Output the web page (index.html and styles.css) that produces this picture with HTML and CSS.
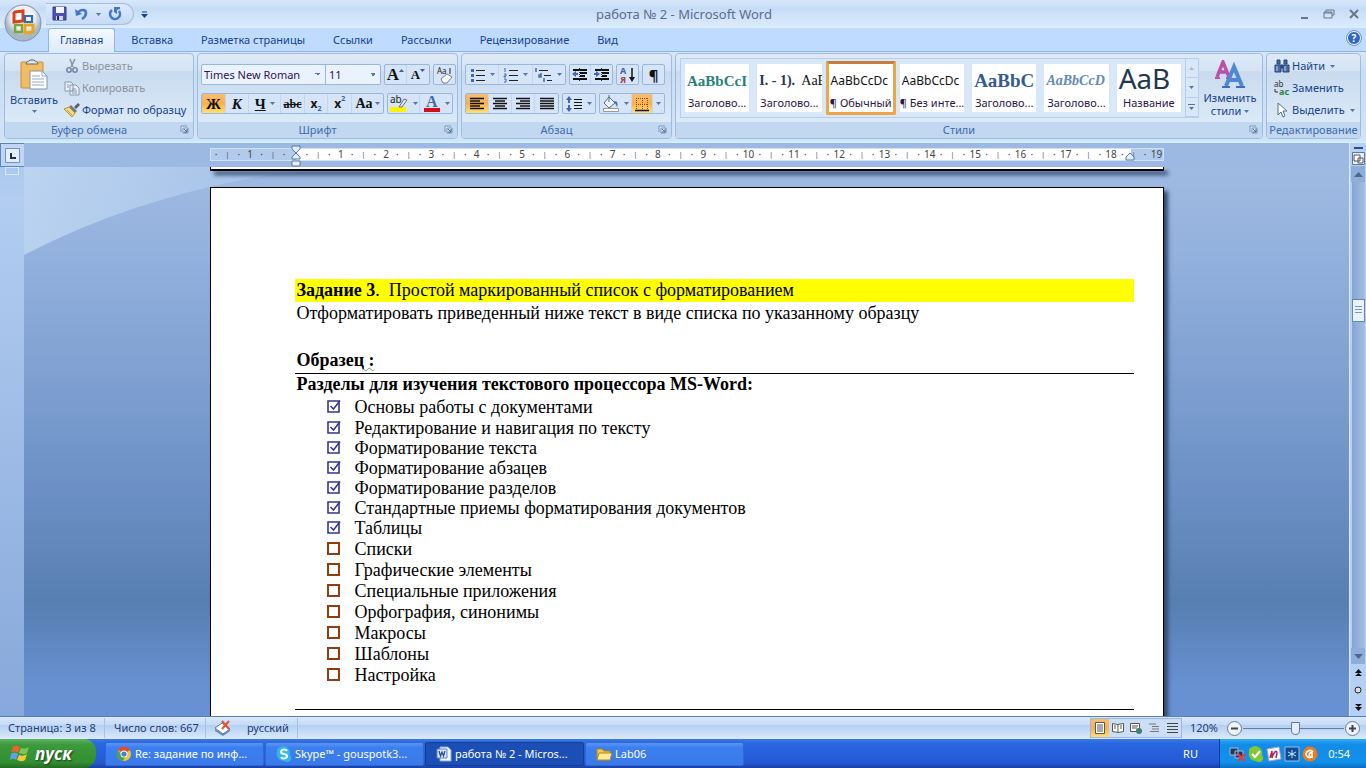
FILE: index.html
```html
<!DOCTYPE html>
<html lang="ru">
<head>
<meta charset="utf-8">
<title>работа № 2 - Microsoft Word</title>
<link rel="stylesheet" href="styles.css">
</head>
<body>
<svg class="defs" aria-hidden="true">
  <symbol id="checked" viewBox="0 0 16 16"><path d="M2 3h11v11H2z" fill="#fff" stroke="#36368c" stroke-width="1.6"/><path d="M4.500 8l3 3L14 2.500" fill="none" stroke="#36368c" stroke-width="1.500"/></symbol>
  <symbol id="empty" viewBox="0 0 16 16"><path d="M2 3h11v11H2z" fill="#fff" stroke="#933c0e" stroke-width="2"/></symbol>
  <symbol id="launch" viewBox="0 0 9 9"><path d="M1 7V1h6M3 3h5v5H3z" fill="#e8f1fc" stroke="#7390b9"/><path d="M4 4l3 3M7 4v3H4" fill="none" stroke="#42658f"/></symbol>
  <symbol id="caret" viewBox="0 0 5 3"><path d="M0 0h5L2.500 3z" fill="#5675a2"/></symbol>
</svg>
<header class="top">
  <div class="titlebar">
    <button class="orb" aria-label="Office"><svg viewBox="0 0 38 38"><defs><radialGradient id="orbFill" cx=".5" cy=".35"><stop offset="0" stop-color="#fff"/><stop offset=".65" stop-color="#eceff3"/><stop offset="1" stop-color="#a9b6c6"/></radialGradient></defs><circle cx="19" cy="19" r="18" fill="url(#orbFill)" stroke="#8194ad"/><g fill="none" stroke-width="3"><path d="M11 8l8-1v10l-9 1V9z" stroke="#d5431c"/><path d="M22 12h6v6h-7v-6z" stroke="#2b70b9" stroke-width="2.200"/><path d="M11 21h7v7h-7z" stroke="#79a83a" stroke-width="2.400"/><path d="M21 21h8v7l-8 1z" stroke="#e9a420"/></g></svg></button>
    <div class="qat">
      <button aria-label="Сохранить"><svg width="16" height="16" viewBox="0 0 16 16"><path d="M1 1h13v13H1z" fill="#4a50b4" stroke="#373b8c"/><path d="M4 1h8v6H4z" fill="#f3f6ff"/><path d="M4 10h7v4H4z" fill="#cfd6ea"/><path d="M5 10h2v4H5z" fill="#26285e"/></svg></button>
      <button aria-label="Отменить"><svg width="16" height="16" viewBox="0 0 16 16"><path d="M1 3l1 7 6-2z" fill="#4777c9"/><path d="M4 7c2-4 8-4 8 0 0 2-1 4-4 6" fill="none" stroke="#4777c9" stroke-width="2.600"/></svg></button>
      <svg class="caret" width="5" height="3"><use href="#caret"/></svg>
      <button aria-label="Повторить"><svg width="16" height="16" viewBox="0 0 16 16"><path d="M5 4a5 5 0 1 0 7 1" fill="none" stroke="#4777c9" stroke-width="2.600"/><path d="M7 1h6v2l-3 1v4L7 6z" fill="#4777c9"/></svg></button>
    </div>
    <button class="customize" aria-label="Настройка панели"><svg width="7" height="7" viewBox="0 0 7 7"><path d="M1 1h5" stroke="#15428b"/><path d="M0 3h7L3.500 7z" fill="#15428b"/></svg></button>
    <h1>работа № 2 - Microsoft Word</h1>
    <div class="winbtns">
      <button aria-label="Свернуть"><svg width="12" height="12"><path d="M3 10h7" stroke="#6a7788" stroke-width="2"/></svg></button>
      <button aria-label="Восстановить"><svg width="12" height="12"><path d="M3 4V2h8v5H9M1 4h8v6H1zM1 5h8" fill="none" stroke="#6a7788"/></svg></button>
      <button aria-label="Закрыть"><svg width="12" height="12"><path d="M2 2l8 8M10 2l-8 8" stroke="#6a7788" stroke-width="2"/></svg></button>
    </div>
  </div>
  <nav class="tabs">
    <a class="active" href="#home">Главная</a><a href="#insert">Вставка</a><a href="#layout">Разметка страницы</a><a href="#refs">Ссылки</a><a href="#mail">Рассылки</a><a href="#review">Рецензирование</a><a href="#view">Вид</a>
    <button class="help" aria-label="Справка">?</button>
  </nav>
</header>

<main class="ribbon" id="home">
  <section class="group clip">
    <div class="body">
      <button class="big paste"><svg width="30" height="32" viewBox="0 0 30 32"><rect x="2" y="4" width="22" height="26" rx="1" fill="#f0bd62" stroke="#ca8e35"/><path d="M7 6c0-3 3-2 4-4h4c1 2 4 1 4 4z" fill="#dfe3e8" stroke="#616974"/><path d="M11 13h12l5 5v13H11z" fill="#fff" stroke="#7e93b5"/><path d="M23 13v5h5M13 18h8M13 21h12M13 24h12M13 27h12" fill="none" stroke="#91a8cc"/></svg><span>Вставить</span><svg width="5" height="3"><use href="#caret"/></svg></button>
      <div class="cmds">
        <button class="dim"><svg width="16" height="16" viewBox="0 0 16 16"><path d="M6 1l3 8M11 1L7 9" stroke="#8a98ac" stroke-width="1.600"/><circle cx="5" cy="12" r="2.200" fill="none" stroke="#7486a4" stroke-width="1.500"/><circle cx="11" cy="12" r="2.200" fill="none" stroke="#7486a4" stroke-width="1.500"/></svg>Вырезать</button>
        <button class="dim"><svg width="16" height="16" viewBox="0 0 16 16"><path d="M1 2h6l2 2v7H1zM6 5h6l3 3v7H6z" fill="#eaf0f8" stroke="#8798b0"/><path d="M3 5h2M3 7h2M8 9h4M8 11h5M8 13h5" stroke="#8798b0"/></svg>Копировать</button>
        <button><svg width="16" height="16" viewBox="0 0 16 16"><path d="M10 5l4-4 2 2-4 4z" fill="#555c70"/><path d="M7 3l6 6-2 2-6-6z" fill="#6f7a92"/><path d="M5 5l6 6-3 4-8-8z" fill="#f5dd7e" stroke="#b28e33"/><path d="M3 8l5 5" stroke="#c59f42"/></svg>Формат по образцу</button>
      </div>
    </div>
    <h2>Буфер обмена<button class="launch" aria-label="Буфер обмена: параметры"><svg width="9" height="9"><use href="#launch"/></svg></button></h2>
  </section>

  <section class="group font">
    <div class="body rows">
      <div class="row">
        <div class="combo"><select class="family" aria-label="Шрифт"><option>Times New Roman</option></select><select class="size" aria-label="Размер"><option>11</option></select></div>
        <div class="bar"><button class="serif grow" aria-label="Увеличить размер">A<svg width="5" height="16"><path d="M0 5h5L2.500 2z" fill="#3b5e9c"/></svg></button><button class="serif shrink" aria-label="Уменьшить размер">A<svg width="5" height="16"><path d="M0 2h5L2.500 5z" fill="#3b5e9c"/></svg></button></div>
        <div class="bar"><button aria-label="Очистить формат"><svg width="18" height="18" viewBox="0 0 18 18"><text x="1" y="8" font-size="8" fill="#222">Aa</text><path d="M14 2v6" stroke="#222"/><path d="M5 13l6-5 5 3-5 6H7z" fill="#fff" stroke="#6b7f9e"/></svg></button></div>
      </div>
      <div class="row">
        <div class="bar styles7"><button class="on serif b">Ж</button><button class="serif b i">К</button><button class="serif b split"><u>Ч</u><svg width="5" height="3"><use href="#caret"/></svg></button><button class="serif s">abc</button><button class="sx">x<sub>2</sub></button><button class="sx">x<sup>2</sup></button><button class="serif b aa">Aa<svg width="5" height="3"><use href="#caret"/></svg></button></div>
        <div class="bar"><button class="split" aria-label="Выделение"><svg width="20" height="18" viewBox="0 0 20 18"><path d="M1 12h16v5H1z" fill="#fff200"/><text x="1" y="8" font-size="10" fill="#222">ab</text><path d="M10 12l5-8 3 1-5 7z" fill="#dfe6f0" stroke="#65748c"/></svg><svg width="5" height="3"><use href="#caret"/></svg></button><button class="split" aria-label="Цвет текста"><svg width="18" height="18" viewBox="0 0 18 18"><text x="3" y="12" font-size="16" font-weight="bold" class="svgserif" fill="#4568ae">A</text><path d="M1 13h16v4H1z" fill="#d00f18"/></svg><svg width="5" height="3"><use href="#caret"/></svg></button></div>
      </div>
    </div>
    <h2>Шрифт<button class="launch" aria-label="Шрифт: параметры"><svg width="9" height="9"><use href="#launch"/></svg></button></h2>
  </section>

  <section class="group para">
    <div class="body rows">
      <div class="row">
        <div class="bar lists"><button aria-label="Маркеры"><svg width="16" height="16"><path d="M6 3.500h9M6 8.500h9M6 13.500h9" stroke="#222"/><path d="M1 3.500h3M1 8.500h3M1 13.500h3" stroke="#4567aa" stroke-width="3"/></svg><svg width="5" height="3"><use href="#caret"/></svg></button><button aria-label="Нумерация"><svg width="16" height="16"><path d="M6 3.500h9M6 8.500h9M6 13.500h9" stroke="#222"/><path d="M2 1v4M1 7h2v2H1v1h2M1 12h2v3H1" fill="none" stroke="#4567aa"/></svg><svg width="5" height="3"><use href="#caret"/></svg></button><button aria-label="Многоуровневый список"><svg width="18" height="16"><path d="M4 3.500h9M9 8.500h7M12 13.500h5" stroke="#222"/><path d="M1 1v4M6 6v4H4V8h2M9 11v4" fill="none" stroke="#4567aa" stroke-width="1.500"/></svg><svg width="5" height="3"><use href="#caret"/></svg></button></div>
        <div class="bar"><button aria-label="Уменьшить отступ"><svg width="16" height="16"><path d="M1 3h14M8 6h7M8 9h5M1 12h14" stroke="#111" stroke-width="1.800"/><path d="M0 7l4-3v2h2v2H4v2z" fill="#4266b4"/><path d="M7.500 1v14" stroke="#333" stroke-dasharray="1"/></svg></button><button aria-label="Увеличить отступ"><svg width="16" height="16"><path d="M1 3h14M8 6h7M8 9h5M1 12h14" stroke="#111" stroke-width="1.800"/><path d="M6 7L2 4v2H0v2h2v2z" fill="#4266b4"/><path d="M7.500 1v14" stroke="#333" stroke-dasharray="1"/></svg></button></div>
        <div class="bar"><button aria-label="Сортировка"><svg width="16" height="18" viewBox="0 0 16 18"><text x="0" y="8" font-size="9" font-weight="bold" fill="#3e61ad">А</text><text x="0" y="17" font-size="9" font-weight="bold" fill="#a1404a">Я</text><path d="M12 2v12" stroke="#111" stroke-width="1.500"/><path d="M9 11h6l-3 5z" fill="#111"/></svg></button></div>
        <div class="bar"><button class="pil">¶</button></div>
      </div>
      <div class="row">
        <div class="bar align"><button class="on" aria-label="По левому краю"><svg width="16" height="16"><path d="M1 2.500h14M1 5h10M1 7.500h14M1 10h10M1 12.500h14" stroke="#111" stroke-width="1.400"/></svg></button><button aria-label="По центру"><svg width="16" height="16"><path d="M1 2.500h14M3 5h10M1 7.500h14M3 10h10M1 12.500h14" stroke="#111" stroke-width="1.400"/></svg></button><button aria-label="По правому краю"><svg width="16" height="16"><path d="M1 2.500h14M5 5h10M1 7.500h14M5 10h10M1 12.500h14" stroke="#111" stroke-width="1.400"/></svg></button><button aria-label="По ширине"><svg width="16" height="16"><path d="M1 2.500h14M1 5h14M1 7.500h14M1 10h14M1 12.500h14" stroke="#111" stroke-width="1.400"/></svg></button></div>
        <div class="bar"><button class="split" aria-label="Интервал"><svg width="17" height="16"><path d="M8 3.500h8M8 6.500h8M8 9.500h8M8 12.500h8" stroke="#111"/><path d="M3 3v4M3 9v4" stroke="#4266b4" stroke-width="2"/><path d="M0 4l3-4 3 4zM0 12h6l-3 4z" fill="#4266b4"/></svg><svg width="5" height="3"><use href="#caret"/></svg></button></div>
        <div class="bar"><button class="split" aria-label="Заливка"><svg width="18" height="17"><path d="M7 2l6 6-6 5-5-5z" fill="#eef3fa" stroke="#526c92"/><path d="M7 0v7" stroke="#526c92"/><path d="M12 6c4 0 4 3 3 6z" fill="#4a6cb0"/><path d="M1.500 13.500h15v3h-15z" fill="#fff" stroke="#999"/></svg><svg width="5" height="3"><use href="#caret"/></svg></button><button class="on bord" aria-label="Границы"><svg width="16" height="16"><path d="M2 2.500h12M2 8.500h12M2.500 2v12M8.500 2v12M13.500 2v12" stroke="#8a4f16" stroke-dasharray="1"/><path d="M1 14.500h14" stroke="#111" stroke-width="1.500"/></svg></button><button class="tiny" aria-label="Выбор границы"><svg width="5" height="3"><use href="#caret"/></svg></button></div>
      </div>
    </div>
    <h2>Абзац<button class="launch" aria-label="Абзац: параметры"><svg width="9" height="9"><use href="#launch"/></svg></button></h2>
  </section>

  <section class="group looks">
    <div class="body">
      <div class="gallery">
        <button><b class="h1">AaBbCcI</b><span>Заголово...</span></button>
        <button><b class="h2"><strong>I. - 1).</strong>&nbsp; AaE</b><span>Заголово...</span></button>
        <button class="sel"><b class="n">AaBbCcDc</b><span>¶ Обычный</span></button>
        <button><b class="n">AaBbCcDc</b><span>¶ Без инте...</span></button>
        <button><b class="h3">AaBbC</b><span>Заголово...</span></button>
        <button><b class="h4">AaBbCcD</b><span>Заголово...</span></button>
        <button><b class="ttl">АаВ</b><span>Название</span></button>
        <div class="gscroll"><button aria-label="Вверх"><svg width="5" height="3"><path d="M0 3h5L2.500 0z" fill="#a9b8c9"/></svg></button><button aria-label="Вниз"><svg width="5" height="3"><use href="#caret"/></svg></button><button aria-label="Все стили"><svg width="7" height="6"><path d="M0 .5h7" stroke="#5675a2"/><path d="M1 3h5L3.500 6z" fill="#5675a2"/></svg></button></div>
      </div>
      <button class="big change"><svg width="32" height="30" viewBox="0 0 32 30" aria-hidden="true"><g fill="none"><path d="M3 17L9 2l6 15M5 12h8" stroke="#b951a6" stroke-width="3.400"/><path d="M1 18h5M12 18h4" stroke="#b951a6" stroke-width="2"/><path d="M12 26l8-19 8 19M14 20h12" stroke="#4f87d2" stroke-width="4"/><path d="M8 27h8M22 27h9" stroke="#3a70bb" stroke-width="2"/></g></svg><span>Изменить<br>стили <svg width="5" height="5"><use href="#caret" width="5" height="3"/></svg></span></button>
    </div>
    <h2>Стили<button class="launch" aria-label="Стили: параметры"><svg width="9" height="9"><use href="#launch"/></svg></button></h2>
  </section>

  <section class="group edit">
    <div class="body"><div class="cmds">
      <button><svg width="16" height="14"><path d="M3 1h3v4H3zM10 1h3v4h-3zM1 6h6v7H1zM9 6h6v7H9zM7 6h2v3H7z" fill="#49699f" stroke="#27477d"/><path d="M3 7v5M11 7v5" stroke="#c7daf4"/></svg>Найти<svg class="caret" width="5" height="3"><use href="#caret"/></svg></button>
      <button><svg width="16" height="16"><text x="0" y="7" font-size="8" fill="#333">ab</text><text x="5" y="15" font-size="9" font-weight="bold" fill="#27853b">ac</text><path d="M1 9v3h3" fill="none" stroke="#333"/></svg>Заменить</button>
      <button><svg width="16" height="16"><path d="M4 1v12l3-3 2 5 2-1-2-5h4z" fill="#fff" stroke="#5c6e8b"/></svg>Выделить<svg class="caret" width="5" height="3"><use href="#caret"/></svg></button>
    </div></div>
    <h2>Редактирование</h2>
  </section>
</main>

<div class="work">
  <div class="vruler"><button class="tabstop" aria-label="Табуляция"><svg width="15" height="15"><path d="M.5 .5h14v14H.5z" fill="#e4effc" stroke="#6f92c8"/><path d="M6 5v5h5" fill="none" stroke="#222f50" stroke-width="2"/></svg></button><i></i></div>
  <div class="canvas">
    <svg class="swoosh" viewBox="0 0 400 200" aria-hidden="true"><defs><linearGradient id="glow" x2="1" y2="0"><stop offset="0" stop-color="#c5dcf6"/><stop offset="1" stop-color="#a3c0e8"/></linearGradient></defs><path d="M0 0h300Q130 20 0 88z" fill="url(#glow)" opacity=".75"/></svg>
    <div class="rulerbar"><div class="ruler"><div class="ticks"></div><svg class="indent" width="11" height="22"><path d="M1 1h8v3L5 8 1 4zM1 14v-2l4-4 4 4v2zM1 16h8v5H1z" fill="#e2effa" stroke="#5a7b9d"/></svg><svg class="rindent" width="11" height="9"><path d="M1 8V5l4-4 4 4v3z" fill="#e2effa" stroke="#5a7b9d"/></svg></div></div>
    <div class="prev"></div>
    <article class="page">
      <p class="task"><b>Задание 3</b>.&nbsp; Простой маркированный список с форматированием</p>
      <p>Отформатировать приведенный ниже текст в виде списка по указанному образцу</p>
      <p class="sample"><b>Образец<span class="wavy"> :</span></b></p>
      <section class="frame">
        <p><b>Разделы для изучения текстового процессора MS-Word:</b></p>
        <ul>
          <li class="done"><svg><use href="#checked"/></svg>Основы работы с документами</li>
          <li class="done"><svg><use href="#checked"/></svg>Редактирование и навигация по тексту</li>
          <li class="done"><svg><use href="#checked"/></svg>Форматирование текста</li>
          <li class="done"><svg><use href="#checked"/></svg>Форматирование абзацев</li>
          <li class="done"><svg><use href="#checked"/></svg>Форматирование разделов</li>
          <li class="done"><svg><use href="#checked"/></svg>Стандартные приемы форматирования документов</li>
          <li><svg><use href="#checked"/></svg>Таблицы</li>
          <li><svg><use href="#empty"/></svg>Списки</li>
          <li><svg><use href="#empty"/></svg>Графические элементы</li>
          <li><svg><use href="#empty"/></svg>Специальные приложения</li>
          <li><svg><use href="#empty"/></svg>Орфография, синонимы</li>
          <li><svg><use href="#empty"/></svg>Макросы</li>
          <li><svg><use href="#empty"/></svg>Шаблоны</li>
          <li><svg><use href="#empty"/></svg>Настройка</li>
        </ul>
      </section>
    </article>
  </div>
  <div class="scroll">
    <i class="splitter"></i>
    <button class="rtoggle" aria-label="Линейка"><svg width="13" height="13"><path d="M.5 .5h12v12H.5z" fill="#eaf2fc" stroke="#58779f"/><path d="M2 3h6v6H2zM6 6h5v5H6z" fill="#fff" stroke="#555"/></svg></button>
    <button class="arrow" aria-label="Вверх"><svg width="9" height="5"><path d="M0 5h9L4.500 0z" fill="#496799"/></svg></button>
    <div class="track"><i class="thumb"></i></div>
    <button class="arrow" aria-label="Вниз"><svg width="9" height="5"><path d="M0 0h9L4.500 5z" fill="#496799"/></svg></button>
    <div class="browse"><button aria-label="Предыдущая страница"><svg width="7" height="8"><path d="M0 4h7L3.500 0zM0 7h7L3.500 4z" fill="#111"/></svg></button><button aria-label="Объект перехода"><svg width="8" height="8"><circle cx="4" cy="4" r="3" fill="#ddd" stroke="#222"/></svg></button><button aria-label="Следующая страница"><svg width="7" height="8"><path d="M0 1h7L3.500 4zM0 4h7L3.500 8z" fill="#111"/></svg></button></div>
  </div>
</div>

<div class="status">
  <span class="pg">Страница: 3 из 8</span><span class="words">Число слов: 667</span>
  <span class="lang"><svg width="18" height="16"><path d="M1 8l7-5 8 6-7 5z" fill="#fff" stroke="#5676a4"/><path d="M1 9v2l8 5 7-5V9l-7 5z" fill="#5e87c4"/><path d="M8 1l7 8M15 1L8 9" stroke="#e05230" stroke-width="2"/></svg>русский</span>
  <div class="views">
    <button class="on" aria-label="Разметка страницы"><svg width="12" height="12"><path d="M1.500 .5h9v11h-9z" fill="#fff" stroke="#555"/><path d="M3 3h6M3 5h6M3 7h6M3 9h6" stroke="#555"/></svg></button>
    <button aria-label="Режим чтения"><svg width="12" height="12"><path d="M.5 1.500l5 1 6-1v8l-5 1-6-1zM6 2v9M2 4h2M2 6h2M8 4h2M8 6h2" fill="#fff" stroke="#555"/></svg></button>
    <button aria-label="Веб-документ"><svg width="12" height="12"><path d="M.5 1.500h9v8h-9zM2 4h6M2 6h5" fill="#fff" stroke="#555"/><circle cx="9" cy="9" r="3" fill="#38836d"/></svg></button>
    <button aria-label="Структура"><svg width="12" height="12"><path d="M1 2h7M4 4.500h7M4 7h7M2 9.500h9" stroke="#777"/></svg></button>
    <button aria-label="Черновик"><svg width="12" height="12"><path d="M1 1.500h11M1 4.500h11M1 7.500h11M1 10.500h11" stroke="#444"/></svg></button>
  </div>
  <button class="pct">120%</button>
  <div class="zoom"><button aria-label="Уменьшить"><svg width="17" height="17"><circle cx="8.500" cy="8.500" r="7" fill="#edf3fb" stroke="#6a7e98"/><path d="M5 8.500h7" stroke="#444" stroke-width="2"/></svg></button><input type="range" min="0" max="100" value="52" aria-label="Масштаб"><button aria-label="Увеличить"><svg width="17" height="17"><circle cx="8.500" cy="8.500" r="7" fill="#edf3fb" stroke="#6a7e98"/><path d="M5 8.500h7M8.500 5v7" stroke="#444" stroke-width="2"/></svg></button></div>
</div>

<footer class="taskbar">
  <button class="start"><svg width="20" height="19" viewBox="0 0 20 19"><path d="M3 3c3-2 4-1 7 0L8 9C6 7 3 7 1 9z" fill="#ec6231"/><path d="M11 4c3 1 5 1 8-1l-2 6c-3 2-5 1-8 0z" fill="#7fc551"/><path d="M1 10c3-2 5-1 7 0l-2 6c-3-2-4-1-6 0z" fill="#5da1ef"/><path d="M9 11c3 1 5 1 8-1l-2 6c-3 2-5 1-8 0z" fill="#f8c73c"/></svg>пуск</button>
  <button class="task-btn"><svg width="16" height="16" viewBox="0 0 16 16"><circle cx="8" cy="8" r="7" fill="#efc72d"/><path d="M8 8L2 4a7 7 0 0 1 12 0z" fill="#dd4c39"/><path d="M2 4a7 7 0 0 0 5 11l3-6-5-1z" fill="#49a350"/><circle cx="8" cy="8" r="3.500" fill="#fff"/><circle cx="8" cy="8" r="2.600" fill="#467de1"/></svg>Re: задание по инф...</button>
  <button class="task-btn"><svg width="16" height="16" viewBox="0 0 16 16"><path d="M4 1a7 7 0 0 1 10 8 4 4 0 0 1-6 6A7 7 0 0 1 1 6a4 4 0 0 1 3-5z" fill="#30b5ed"/><path d="M11 5c-1-2-6-2-6 1s6 1 6 4-5 3-6 1" fill="none" stroke="#fff" stroke-width="2"/></svg>Skype™ - gouspotk3...</button>
  <button class="task-btn current"><svg width="16" height="16" viewBox="0 0 16 16"><path d="M4 1h8l3 3v11H4z" fill="#f5f9ff" stroke="#8ba9dc"/><path d="M1 3h10v9H1z" fill="#dce8ff" stroke="#5c83c8"/><path d="M3 5l1.500 5L6 6l1.500 4L9 5" fill="none" stroke="#254d9c" stroke-width="1.300"/></svg>работа № 2 - Micros...</button>
  <button class="task-btn"><svg width="16" height="16" viewBox="0 0 16 16"><path d="M1 3h5l2 2h6v9H1z" fill="#f0c94e" stroke="#af8620"/><path d="M3 7h13l-2 7H1z" fill="#ffeb93" stroke="#af8620"/></svg>Lab06</button>
  <span class="ru">RU</span>
  <div class="tray">
    <svg width="17" height="16"><path d="M1 2h8v7H1zM6 5h8v7H6z" fill="#26375f" stroke="#a5b8dc"/><path d="M9 8l7 7M16 8l-7 7" stroke="#e83b32" stroke-width="2"/></svg>
    <svg width="16" height="16"><path d="M4 1a7 7 0 0 1 10 8 4 4 0 0 1-6 6A7 7 0 0 1 1 6a4 4 0 0 1 3-5z" fill="#83c832"/><path d="M4 8l3 3 5-6" fill="none" stroke="#fff" stroke-width="2"/></svg>
    <svg width="16" height="16"><path d="M1 3l12-2 2 12-12 2z" fill="#fff" stroke="#b6a1b9"/><path d="M4 12l2-7v7c1-5 5-9 5-5l-1 5" fill="none" stroke="#a82b59" stroke-width="1.500"/></svg>
    <svg width="16" height="16"><path d="M1 1h14v14H1z" fill="#114b90" stroke="#9cbce0"/><path d="M8 4v8M4 6l8 4M12 6l-8 4" stroke="#bce7ff"/></svg>
    <svg width="16" height="16"><circle cx="8" cy="8" r="7.500" fill="#ef791d"/><path d="M11 6c-2-3-7-1-7 2s4 5 6 2V7c-2-1-4 2-2 3M10 7v5" fill="none" stroke="#fff" stroke-width="1.700"/></svg>
    <time>0:54</time>
  </div>
</footer>
<script src="script.js"></script>
</body>
</html>
```
FILE: styles.css
```css
* { box-sizing: border-box; }
body { margin: 0; height: 100vh; overflow: hidden; display: flex; flex-direction: column; font: 11px/14px "Noto Sans", sans-serif; color: #15428b; white-space: nowrap; }
button { font: inherit; color: inherit; background: none; border: 0; padding: 0; margin: 0; display: flex; align-items: center; justify-content: center; white-space: nowrap; }
a { color: inherit; text-decoration: none; }
h1, h2, p, ul { margin: 0; padding: 0; font-weight: normal; }
svg { flex: none; font-family: "Noto Sans", sans-serif; }
.svgserif { font-family: "Liberation Serif", serif; }
.defs { position: absolute; width: 0; height: 0; }
.serif { font-family: "Liberation Serif", serif; }

.titlebar { height: 28px; display: flex; align-items: center; position: relative; background: linear-gradient(#d8e7fa, #cbdff7 25%, #c5dbf6 26%, #dcecfd); padding-left: 46px; }
.orb { position: absolute; left: 3px; top: 3px; width: 39px; height: 39px; z-index: 2; }
.orb svg { width: 38px; height: 38px; }
.qat { height: 22px; width: 88px; display: flex; align-items: center; gap: 6px; padding-left: 6px; border: 1px solid #a3bfe2; border-left: 0; border-radius: 0 12px 12px 0; background: linear-gradient(#dbe9fb, #c6dbf5); }
.customize { width: 20px; height: 20px; }
h1 { flex: 1; text-align: center; padding-right: 84px; font-size: 13px; color: #5d6b8d; }
.winbtns { display: flex; gap: 13px; padding-right: 6px; }
.tabs { height: 24px; display: flex; background: #bfdbff; padding-left: 48px; border-bottom: 1px solid #8db2e3; }
.tabs a { line-height: 24px; padding: 0 14px; }
.tabs a.active { margin-right: 2px; height: 24px; padding: 0 11px; border: 1px solid #8eb7e4; border-bottom: 0; border-radius: 3px 3px 0 0; background: linear-gradient(#f4f9ff, #dfebf9); line-height: 22px; }
.help { margin: 3px 5px 0 auto; width: 14px; height: 14px; border-radius: 50%; color: #fff; background: #2f67c4; border: 1px solid #fff; outline: 1px solid #7293c5; font-weight: bold; font-size: 10px; }

.ribbon { height: 91px; display: flex; gap: 3px; padding: 1px 5px 2px 4px; background: linear-gradient(#d9e7f7, #c9ddf3 25%, #d3e3f6); border-bottom: 2px solid #d0edfa; }
.group { flex: none; border: 1px solid #9dbde0; border-radius: 4px; display: flex; flex-direction: column; overflow: hidden; background: linear-gradient(#dfeaf7, #d4e3f4 20%, #c9daef 21%, #dcebf9 85%); }
.group .body { flex: 1; min-height: 0; display: flex; }
.group h2 { flex: none; height: 16px; font-size: 11px; line-height: 15px; text-align: center; background: #c1d8f0; color: #3e6aaa; position: relative; }
.launch { position: absolute; right: 4px; top: 3px; }
.clip { width: 190px; } .font { width: 261px; } .para { width: 211px; }
.clip h2, .font h2, .para h2, .looks h2 { padding-right: 20px; }
.group.looks { flex: 1; min-width: 0; }
.edit { width: 95px; }
.big { flex-direction: column; justify-content: flex-start; gap: 3px; }
.paste { width: 58px; padding-top: 4px; }
.cmds { display: flex; flex-direction: column; padding-top: 1px; }
.cmds button { height: 22px; gap: 2px; justify-content: flex-start; padding-left: 1px; }
.cmds .caret { margin-left: 3px; }
.dim { color: #8c929c; }
.edit .cmds { padding-left: 6px; }
.rows { flex-direction: column; gap: 8px; padding: 10px 3px 0 3px; }
.row { display: flex; gap: 3px; }
.bar, .combo { display: flex; flex: none; height: 21px; border: 1px solid #98b7de; border-radius: 2px; background: #d5e4f6; }
.bar button { width: 21px; gap: 4px; color: #111; border-right: 1px solid #c3d6ed; }
.bar button:last-child { border-right: 0; }
.bar .split { width: 32px; }
.combo { background: #eaf3fd; }
select { appearance: none; border: 0; margin: 0; padding: 0 2px; font: inherit; color: #2e1450; background: linear-gradient(45deg, transparent 50%, #5675a2 50%) no-repeat right 7px center / 3px 3px, linear-gradient(-45deg, transparent 50%, #5675a2 50%) no-repeat right 4px center / 3px 3px; }
.family { width: 123px; } .size { width: 55px; border-left: 1px solid #98b7de; padding-left: 3px; }
.on { background: linear-gradient(#f7bd75, #f8b04e 50%, #ffe071); }
.b { font-weight: bold; font-size: 15px; } .i { font-style: italic; }
.s { text-decoration: line-through; font-size: 12px; font-weight: bold; }
.sx { font-weight: bold; font-size: 12px; } .bar .sx { gap: 0; }
.sx sub, .sx sup { font-size: 7px; line-height: 9px; color: #3b5e9c; }
.sx sub { align-self: flex-end; } .sx sup { align-self: flex-start; }
.bar .grow, .bar .shrink { gap: 0; font-weight: bold; font-size: 17px; width: 22px; } .bar .shrink { font-size: 13px; }
.bar .aa { gap: 2px; font-size: 14px; }
.styles7 { width: 183px; }
.styles7 button { flex: 1; } .styles7 .split { flex: none; } .bar.styles7 .aa { flex: none; width: 31px; }
.lists button { flex: 1; }
.lists { width: 101px; }
.align button { width: 23px; }
.bar .tiny { width: 11px; }
.pil { font-size: 15px; font-weight: bold; }
.looks .body { padding: 4px 1px 0 4px; }
.gallery { flex: 1; min-width: 0; display: flex; height: 60px; padding-top: 2px; border: 1px solid #b6cfec; background: #d9e8f9; }
.gallery > button { flex: 1; min-width: 0; height: 54px; border: 3px solid #d9e8f9; border-width: 3px 4px; background: #fff; flex-direction: column; justify-content: flex-end; overflow: hidden; color: #2b1546; }
.gallery b { flex: 1; min-height: 0; font-weight: normal; width: 100%; text-align: left; padding-left: 2px; overflow: hidden; line-height: 34px; font-size: 12px; color: #111; }
.gallery span { height: 18px; line-height: 17px; }
.gallery > .sel { border: 3px solid #efa544; border-top-color: #c27f42; border-radius: 2px; }
.gallery .h1 { font: bold 15px/34px "Liberation Serif", serif; color: #26817c; }
.gallery .h2 { font: 14px/34px "Liberation Serif", serif; } .h2 strong { color: #1f3658; }
.gallery .h3 { font: bold 19px/34px "Liberation Serif", serif; color: #345d8b; }
.gallery .h4 { font: italic bold 14px/34px "Liberation Serif", serif; color: #6489b6; }
.gallery .ttl { font: 28px/28px "Noto Sans", sans-serif; color: #21394f; }
.gscroll { width: 13px; flex: none; margin-top: -2px; display: flex; flex-direction: column; border-left: 1px solid #b6cfec; }
.gscroll button { flex: 1; border-bottom: 1px solid #b6cfec; }
.change { flex: none; width: 62px; padding-top: 2px; gap: 1px; line-height: 13px; }

.work { flex: 1; min-height: 0; display: flex; }
.vruler { width: 24px; background: linear-gradient(#a9c5ec, #b2cdf1 10%, #87a8da); }
.tabstop { width: 25px; height: 24px; border: 1px solid #5c83c4; background: #bfd5f2; }
.vruler i { display: block; width: 14px; height: 8px; margin-left: 5px; border: 1px solid #d8e7fb; }
.canvas { flex: 1; min-width: 0; position: relative; display: flex; flex-direction: column; align-items: center; overflow: hidden; background: linear-gradient(#a3bde3, #94b2de 18%, #6c90c5 60%, #587fb2 80%, #6791d1 95%); }
.swoosh { position: absolute; left: 0; top: 24px; width: 400px; height: 200px; }
.rulerbar { align-self: stretch; height: 24px; flex: none; background: #9bb9e2; display: flex; justify-content: center; padding-top: 5px; z-index: 1; }
.ruler { width: 72%; height: 13px; position: relative; border: 1px solid #d0e1f6; background: linear-gradient(90deg, #b2cbed 85px, #fff 85px, #fff calc(100% - 32px), #b2cbed calc(100% - 32px)); }
.ticks { display: flex; color: #444; font-size: 10px; line-height: 11px; }
.ticks span { flex: 1 1 0; width: 0; display: flex; justify-content: center; }
.ticks .half { font-size: 7px; }
.indent { position: absolute; left: 80px; top: -4px; }
.rindent { position: absolute; right: 27px; top: 3px; }
.prev, .page { width: 72%; background: #fff; border: 1px solid #000; box-shadow: 4px 4px 4px #32496f; z-index: 1; flex: none; }
.prev { height: 4px; border-top: 0; border-bottom-width: 2px; margin-bottom: 16px; }
.page { flex: 1; min-height: 0; border-bottom: 0; padding: 91px 29px 0 84px; font: 18px/22px "Liberation Serif", serif; color: #000; }
.page p { padding-left: 2px; height: 23px; }
.page .task { background: #ff0; }
.page .sample { margin-top: 24px; height: 24px; }
.wavy { text-decoration: underline wavy #6f9c75 1px; }
.frame { border: solid #000; border-width: 1px 0; height: 337px; }
.frame p { line-height: 21px; }
ul { list-style: none; }
li { height: 21px; line-height: 21px; display: flex; padding-left: 31px; gap: 13px; }
li.done:nth-child(n+2) { height: 20px; line-height: 20px; }
li svg { width: 16px; height: 16px; margin-top: 1px; }
.scroll { width: 17px; display: flex; flex-direction: column; align-items: center; background: #b6d0f4; border-left: 1px solid #dceafb; }
.splitter { width: 9px; height: 2px; margin: 4px 0 2px; background: #304b7b; }
.rtoggle { height: 15px; }
.arrow { height: 16px; width: 14px; background: #8eaed9; }
.track { flex: 1; width: 13px; background: linear-gradient(90deg, #84a4d0, #a4bfe4); }
.thumb { display: block; height: 23px; margin-top: 117px; border: 1px solid #6685b0; background: repeating-linear-gradient(#7897c2 0 1px, transparent 1px 3px) center / 7px 9px no-repeat, #eaf2fc; }
.browse { height: 52px; display: flex; flex-direction: column; justify-content: space-around; }

.status { height: 23px; display: flex; align-items: center; border-top: 1px solid #567faf; background: linear-gradient(#d9e8fb, #c5dbf7 35%, #b2cef1 36%, #dceafb); color: #243a75; }
.status > span { height: 20px; line-height: 20px; border-right: 1px solid #a6c2e6; }
.pg { width: 105px; padding-left: 8px; } .words { width: 101px; padding-left: 9px; }
.lang { width: 92px; padding-left: 8px; display: flex; align-items: center; gap: 15px; }
.views { margin-left: auto; display: flex; border: 1px solid #9bb9de; background: #cbdef5; }
.views button { width: 18px; height: 18px; }
.pct { width: 44px; font-size: 11px; }
.zoom { display: flex; align-items: center; padding-right: 5px; }
.zoom input { appearance: none; width: 101px; height: 1px; margin: 0; background: #5f7ca6; }
.zoom input::-webkit-slider-thumb { appearance: none; width: 9px; height: 13px; background: #e4edfa; border: 1px solid #637a9c; border-radius: 1px 1px 5px 5px; }
.taskbar { height: 29px; display: flex; align-items: center; background: linear-gradient(#3a79e2, #2867df 15%, #2459d6 80%, #1941a5); color: #fff; font: 11px/14px "Noto Sans", sans-serif; }
.start { width: 96px; height: 29px; gap: 5px; margin-right: 9px; padding-right: 14px; border-radius: 0 12px 12px 0; background: linear-gradient(#5fb461, #3c993d 20%, #33902f 80%, #236a24); font: italic bold 17px/20px "Open Sans", sans-serif; text-shadow: 1px 1px 2px #143b12; }
.task-btn { width: 159px; min-width: 0; height: 24px; justify-content: flex-start; padding-left: 10px; gap: 3px; border-radius: 2px; border: 1px solid #3167d0; background: linear-gradient(#5a97f7, #3c7ff0 20%, #3a79ea); margin-right: 1px; }
.task-btn.current { background: #1b4fb5; border-color: #143d93; }
.ru { margin-left: auto; margin-right: 21px; }
.tray { height: 29px; width: 147px; display: flex; align-items: center; gap: 2px; padding-left: 9px; border-left: 1px solid #0b3b9c; background: linear-gradient(#2fa9f4, #128ce8 20%, #1190ea 80%, #0c6cc0); }
time { margin-left: auto; margin-right: 16px; }
```
FILE: script.js
```js
const ticks = document.querySelector('.ticks');
for (let n = -7; n <= 76; n++) {
  const mark = document.createElement('span');
  if (n === 0) mark.textContent = '';
  else if (n % 4 === 0) mark.textContent = Math.abs(n / 4);
  else if (n % 2 === 0) { mark.textContent = '|'; mark.className = 'half'; }
  else mark.textContent = '·';
  ticks.append(mark);
}
```
